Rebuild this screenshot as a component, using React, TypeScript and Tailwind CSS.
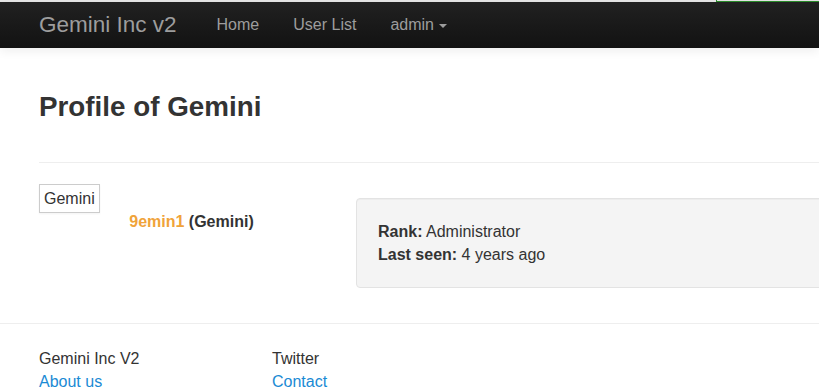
export default function App() {
  return (
    <div className="relative min-h-screen overflow-hidden bg-white font-['Liberation_Sans',Arial,sans-serif] text-[16px] text-[#333]">
      <div className="absolute left-[716px] top-[-6px] h-[8px] w-[200px] border border-[#2a8a2a]" />

      <div className="h-[2px] bg-[#e6e6e6]" />

      {/* Navbar */}
      <nav className="flex h-[46px] items-center bg-gradient-to-b from-[#212121] to-[#121212] pl-[39px] shadow-[0_3px_10px_rgba(0,0,0,0.07)]">
        <span className="text-[22.5px] leading-none text-[#9d9d9d]">Gemini Inc v2</span>
        <div className="ml-[40px] flex items-center gap-[34px] text-[16px] text-[#9d9d9d]">
          <span>Home</span>
          <span>User List</span>
          <span className="flex items-center gap-[5px]">
            admin
            <span className="mt-[1px] h-0 w-0 border-x-[4px] border-t-[4px] border-x-transparent border-t-[#9d9d9d]" />
          </span>
        </div>
      </nav>

      <main className="px-[39px] pt-[43px]">
        <h1 className="text-[27.8px] font-bold leading-[31px] text-[#333]">Profile of Gemini</h1>
        <hr className="mr-[-39px] mt-[40px] border-t border-[#eee]" />

        <div className="flex pt-[21px]">
          {/* avatar + name */}
          <div className="w-[305px] shrink-0">
            <span className="inline-block h-[29px] border border-[#ccc] px-[4px] leading-[27px] shadow-[0_1px_2px_rgba(0,0,0,0.05)]">
              Gemini
            </span>
            <div className="mt-[-3px] text-center font-bold leading-[23px]">
              <span className="text-[#f0a33a]">9emin1</span> (Gemini)
            </div>
          </div>

          {/* info well */}
          <div className="ml-[12px] flex-1 pt-[14px]">
            <div className="mr-[-60px] h-[90px] rounded-[4px] border border-[#e3e3e3] bg-[#f4f4f4] px-[21px] py-[21px] leading-[23px] shadow-[inset_0_1px_1px_rgba(0,0,0,0.03)]">
              <div>
                <b>Rank:</b> Administrator
              </div>
              <div>
                <b>Last seen:</b> 4 years ago
              </div>
            </div>
          </div>
        </div>
      </main>

      <hr className="mt-[35px] border-t border-[#eee]" />

      <footer className="flex px-[39px] pt-[23px] leading-[23px]">
        <div className="w-[233px]">
          <div>Gemini Inc V2</div>
          <div className="text-[#1a8ad4]">About us</div>
        </div>
        <div>
          <div>Twitter</div>
          <div className="text-[#1a8ad4]">Contact</div>
        </div>
      </footer>
    </div>
  )
}
